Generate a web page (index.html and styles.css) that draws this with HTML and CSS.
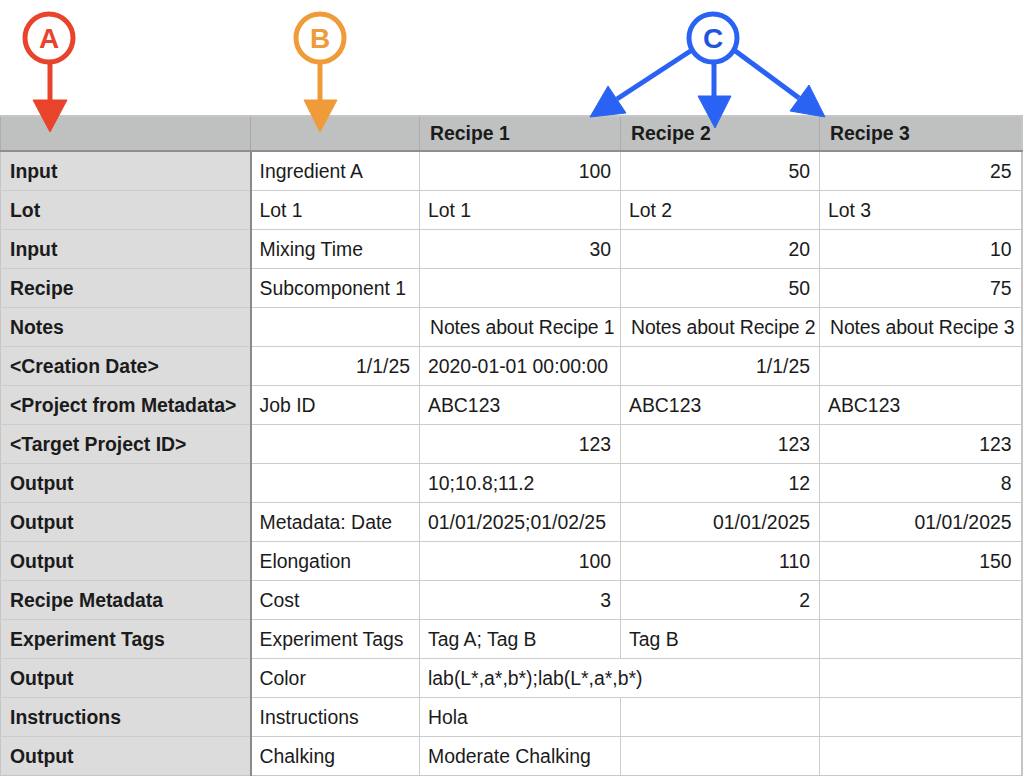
FILE: index.html
```html
<!DOCTYPE html>
<html>
<head>
<meta charset="utf-8">
<link rel="stylesheet" href="styles.css">
</head>
<body>
<div class="page">
  <div class="annot-space"></div>
  <svg class="annot" width="1024" height="140" viewBox="0 0 1024 140" xmlns="http://www.w3.org/2000/svg">
    <g class="red">
      <line x1="50" y1="62" x2="50" y2="102" stroke-width="5"/>
      <polygon points="33,100 67,100 50,132"/>
      <circle cx="49" cy="38" r="24" fill="#fff" stroke-width="5"/>
      <text x="49" y="48" class="lbl">A</text>
    </g>
    <g class="orange">
      <line x1="320" y1="62" x2="320" y2="102" stroke-width="5"/>
      <polygon points="304,100 337,100 320,132"/>
      <circle cx="320" cy="38" r="24" fill="#fff" stroke-width="5"/>
      <text x="320" y="48" class="lbl">B</text>
    </g>
    <g class="blue">
      <line x1="714" y1="60" x2="714" y2="98" stroke-width="5"/>
      <polygon points="698,96 731,96 715,128"/>
      <line x1="692" y1="50" x2="617" y2="99" stroke-width="5"/>
      <polygon points="590,117 608,86 626,113"/>
      <line x1="734" y1="50" x2="799" y2="98" stroke-width="5"/>
      <polygon points="825,117 790,111 809,85"/>
      <circle cx="713" cy="38" r="24" fill="#fff" stroke-width="5"/>
      <text x="713" y="48" class="lbl">C</text>
    </g>
  </svg>
  <table class="sheet">
    <colgroup>
      <col class="c-a"><col class="c-b"><col class="c-c"><col class="c-d"><col class="c-e">
    </colgroup>
    <thead>
      <tr class="head">
        <th class="rowhead"></th><th></th><th>Recipe 1</th><th>Recipe 2</th><th>Recipe 3</th>
      </tr>
    </thead>
    <tbody>
      <tr><th class="rowhead">Input</th><td>Ingredient A</td><td class="num">100</td><td class="num">50</td><td class="num">25</td></tr>
      <tr><th class="rowhead">Lot</th><td>Lot 1</td><td>Lot 1</td><td>Lot 2</td><td>Lot 3</td></tr>
      <tr><th class="rowhead">Input</th><td>Mixing Time</td><td class="num">30</td><td class="num">20</td><td class="num">10</td></tr>
      <tr><th class="rowhead">Recipe</th><td>Subcomponent 1</td><td></td><td class="num">50</td><td class="num">75</td></tr>
      <tr><th class="rowhead">Notes</th><td></td><td class="tight">Notes about Recipe 1</td><td class="tight">Notes about Recipe 2</td><td class="tight">Notes about Recipe 3</td></tr>
      <tr><th class="rowhead">&lt;Creation Date&gt;</th><td class="num">1/1/25</td><td>2020-01-01 00:00:00</td><td class="num">1/1/25</td><td></td></tr>
      <tr><th class="rowhead">&lt;Project from Metadata&gt;</th><td>Job ID</td><td>ABC123</td><td>ABC123</td><td>ABC123</td></tr>
      <tr><th class="rowhead">&lt;Target Project ID&gt;</th><td></td><td class="num">123</td><td class="num">123</td><td class="num">123</td></tr>
      <tr><th class="rowhead">Output</th><td></td><td>10;10.8;11.2</td><td class="num">12</td><td class="num">8</td></tr>
      <tr><th class="rowhead">Output</th><td>Metadata: Date</td><td>01/01/2025;01/02/25</td><td class="num">01/01/2025</td><td class="num">01/01/2025</td></tr>
      <tr><th class="rowhead">Output</th><td>Elongation</td><td class="num">100</td><td class="num">110</td><td class="num">150</td></tr>
      <tr><th class="rowhead">Recipe Metadata</th><td>Cost</td><td class="num">3</td><td class="num">2</td><td></td></tr>
      <tr><th class="rowhead">Experiment Tags</th><td>Experiment Tags</td><td>Tag A; Tag B</td><td>Tag B</td><td></td></tr>
      <tr><th class="rowhead">Output</th><td>Color</td><td colspan="2">lab(L*,a*,b*);lab(L*,a*,b*)</td><td></td></tr>
      <tr><th class="rowhead">Instructions</th><td>Instructions</td><td>Hola</td><td></td><td></td></tr>
      <tr><th class="rowhead">Output</th><td>Chalking</td><td>Moderate Chalking</td><td></td><td></td></tr>
    </tbody>
  </table>
</div>
</body>
</html>
```

FILE: styles.css
```css
html, body {
  margin: 0;
  padding: 0;
  background: #ffffff;
}

.page {
  position: relative;
  width: 1024px;
  height: 776px;
  overflow: hidden;
  font-family: "Liberation Sans", Arial, Helvetica, sans-serif;
}

.annot-space {
  height: 115px;
}

.annot {
  position: absolute;
  top: 0;
  left: 0;
  z-index: 2;
}

.annot .red { fill: #e9432b; stroke: #e9432b; }
.annot .orange { fill: #f09b3a; stroke: #f09b3a; }
.annot .blue { fill: #2a63f4; stroke: #2a63f4; }

.annot circle { fill: #ffffff; }

.annot .lbl {
  font-family: "Liberation Sans", Arial, sans-serif;
  font-weight: bold;
  font-size: 28px;
  text-anchor: middle;
  stroke: none;
}
.annot .red .lbl { fill: #e9432b; }
.annot .orange .lbl { fill: #f09b3a; }
.annot .blue .lbl { fill: #1f55d8; }

.sheet {
  border-collapse: collapse;
  table-layout: fixed;
  width: 1021px;
  font-size: 19.4px;
  color: #1b1b1b;
  border: 2px solid #c6c6c6;
  border-left: 1px solid #c6c6c6;
}

.c-a { width: 250px; }
.c-b { width: 169px; }
.c-c { width: 201px; }
.c-d { width: 199px; }
.c-e { width: 202px; }

.sheet th,
.sheet td {
  border: 1px solid #cccccc;
  padding: 0 9px 0 8px;
  height: 38px;
  text-align: left;
  vertical-align: middle;
  white-space: nowrap;
  overflow: visible;
}

.sheet td { background: #ffffff; font-weight: normal; }

.sheet th { font-weight: bold; }

.sheet .head th {
  background: #bfc1c0;
  height: 33px;
  border-top: 0;
  border-bottom: 2px solid #8e8e8e;
  border-left: 1px solid #adadad;
  border-right: 1px solid #adadad;
  padding-top: 0;
  padding-left: 10px;
}

.sheet .rowhead {
  background: #dcdcdc;
  border-right: 2px solid #8a8a8a;
  padding-left: 9px;
  border-left-color: #c6c6c6;
}

.sheet .head .rowhead {
  background: #bfc1c0;
  border-right: 1px solid #a6a6a6;
}

.sheet td.num { text-align: right; }

.sheet td.tight { padding-left: 10px; padding-right: 2px; letter-spacing: -0.1px; }
```
